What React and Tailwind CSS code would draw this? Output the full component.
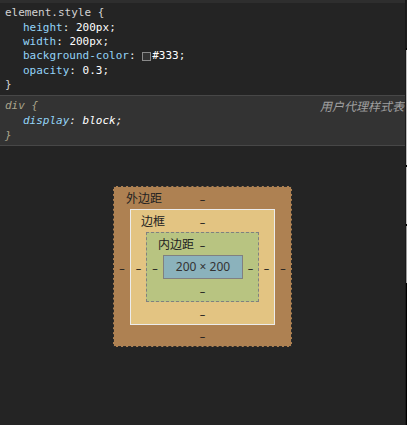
import React from "react";

const mono = { fontFamily: '"DejaVu Sans Mono", "Liberation Mono", monospace' };

function Dash({ className = "" }) {
  return (
    <span className={"text-[11px] leading-none text-[#1e1e1e] " + className} style={{ fontFamily: '"Noto Sans", sans-serif' }}>
      –
    </span>
  );
}

function Label({ children, left }) {
  return (
    <span
      className={"absolute top-0 h-full flex items-center text-[12px] text-[#222] " + left}
      style={{ fontFamily: '"Noto Sans CJK SC", "Noto Sans", sans-serif' }}
    >
      {children}
    </span>
  );
}

export default function App() {
  return (
    <div className="w-[407px] h-[425px] bg-[#242424] flex overflow-hidden">
      <div className="w-[405px] flex flex-col">
        <div className="h-[3px] bg-[#2e2e2e]" />
        {/* element.style */}
        <div className="bg-[#242424] pt-[2px] pb-[3px] text-[11px]" style={mono}>
          <div className="h-[16px] leading-[16px] pl-[5px] text-[#d2d2d2]">element.style {"{"}</div>
          <div className="pl-[23px] leading-[14.2px]">
            <div>
              <span className="text-[#93d3f7]">height</span>
              <span className="text-[#f0f0f0]">: </span>
              <span className="text-[#ffffff]">200px</span>
              <span className="text-[#f0f0f0]">;</span>
            </div>
            <div>
              <span className="text-[#93d3f7]">width</span>
              <span className="text-[#f0f0f0]">: </span>
              <span className="text-[#ffffff]">200px</span>
              <span className="text-[#f0f0f0]">;</span>
            </div>
            <div className="flex items-center">
              <span className="text-[#93d3f7]">background-color</span>
              <span className="text-[#f0f0f0] whitespace-pre">: </span>
              <span className="inline-block w-[9px] h-[9px] border border-[#8a8a8a] bg-[#333] mr-[1px]" />
              <span className="text-[#ffffff]">#333</span>
              <span className="text-[#f0f0f0]">;</span>
            </div>
            <div>
              <span className="text-[#93d3f7]">opacity</span>
              <span className="text-[#f0f0f0]">: </span>
              <span className="text-[#ffffff]">0.3</span>
              <span className="text-[#f0f0f0]">;</span>
            </div>
          </div>
          <div className="pl-[5px] leading-[14.2px] text-[#d2d2d2]">{"}"}</div>
        </div>
        <div className="h-px bg-[#474747]" />
        {/* div user agent */}
        <div className="bg-[#333333] pt-[2px] pb-[2px] text-[11px] leading-[15px] italic" style={mono}>
          <div className="flex justify-between">
            <span className="pl-[5px] text-[#aaa58c]">div {"{"}</span>
            <span
              className="text-[12px] text-[#a0a0a0] pr-px whitespace-nowrap"
              style={{ fontFamily: '"Noto Sans CJK SC", sans-serif' }}
            >
              用户代理样式表
            </span>
          </div>
          <div className="pl-[23px]">
            <span className="text-[#93d3f7]">display</span>
            <span className="text-[#f0f0f0]">: </span>
            <span className="text-[#ffffff]">block</span>
            <span className="text-[#f0f0f0]">;</span>
          </div>
          <div className="pl-[5px] text-[#aaa58c]">{"}"}</div>
        </div>
        <div className="h-px bg-[#474747]" />
        {/* box model */}
        <div className="flex-1 bg-[#242424] flex justify-center pt-[40px]">
          <div className="w-[179px] h-[161px] border border-dashed border-[#2a2a2a] bg-[#ae8152] flex flex-col">
            <div className="relative h-[22px] flex items-center justify-center">
              <Label left="left-[12px]">外边距</Label>
              <Dash />
            </div>
            <div className="flex items-center">
              <div className="w-[16px] flex justify-center"><Dash /></div>
              <div className="w-[145px] h-[116px] border border-[#ececec] bg-[#e3c482] flex flex-col">
                <div className="relative h-[22px] flex items-center justify-center">
                  <Label left="left-[10px]">边框</Label>
                  <Dash />
                </div>
                <div className="flex items-center">
                  <div className="w-[15px] flex justify-center"><Dash /></div>
                  <div className="w-[113px] h-[70px] border border-dashed border-[#808080] bg-[#b8c481] flex flex-col">
                    <div className="relative h-[22px] flex items-center justify-center">
                      <Label left="left-[11px]">内边距</Label>
                      <Dash />
                    </div>
                    <div className="flex items-center">
                      <div className="w-[16px] flex justify-center"><Dash /></div>
                      <div
                        className="w-[80px] h-[24px] border border-[#808080] bg-[#8bb2bc] flex items-center justify-center text-[12px] text-[#333] whitespace-pre"
                        style={{ fontFamily: '"Noto Sans", sans-serif' }}
                      >
                        200 × 200
                      </div>
                      <div className="w-[15px] flex justify-center"><Dash /></div>
                    </div>
                    <div className="h-[22px] flex items-center justify-center"><Dash /></div>
                  </div>
                  <div className="w-[15px] flex justify-center"><Dash /></div>
                </div>
                <div className="h-[22px] flex items-center justify-center"><Dash /></div>
              </div>
              <div className="w-[16px] flex justify-center"><Dash /></div>
            </div>
            <div className="h-[21px] flex items-center justify-center"><Dash /></div>
          </div>
        </div>
      </div>
      {/* right edge */}
      <div className="w-px bg-[#1a1a1a]" />
      <div className="w-px flex flex-col">
        <div className="h-[48px] bg-[#1e1e1e]" />
        <div className="h-[2px] bg-black" />
        <div className="h-[115px] bg-[#bdbdbd]" />
        <div className="h-[2px] bg-black" />
        <div className="h-[57px] bg-[#bdbdbd]" />
        <div className="h-[2px] bg-black" />
        <div className="h-[57px] bg-[#9a9a9a]" />
        <div className="flex-1 bg-black" />
      </div>
    </div>
  );
}
